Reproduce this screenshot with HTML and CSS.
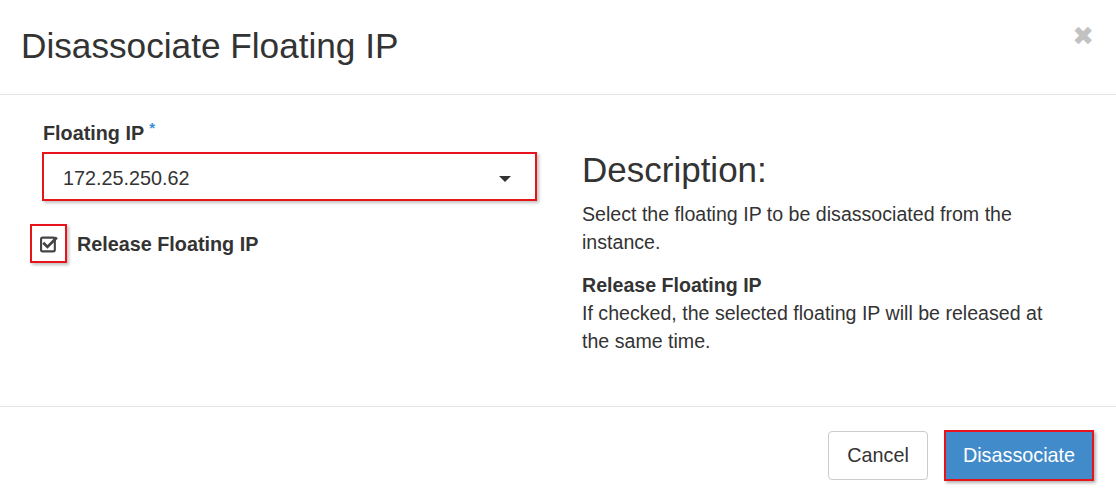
FILE: index.html
```html
<!DOCTYPE html>
<html>
<head>
<meta charset="utf-8">
<link rel="stylesheet" href="styles.css">
</head>
<body>
<div class="modal">
  <div class="modal-header">
    <h3 class="modal-title">Disassociate Floating IP</h3>
    <span class="close">&#x2716;</span>
  </div>
  <div class="modal-body">
    <div class="left">
      <label class="field-label">Floating IP <span class="req">*</span></label>
      <div class="select-box">
        <span class="select-value">172.25.250.62</span>
        <span class="caret"></span>
      </div>
      <div class="check-row">
        <span class="check-box">
          <svg width="18" height="18" viewBox="0 0 17 17">
            <rect x="1" y="2.5" width="13" height="13" rx="1.5" fill="none" stroke="#444" stroke-width="2"/>
            <path d="M4 8.2 L7 11.2 L15 3.2" fill="none" stroke="#444" stroke-width="2.6" stroke-linecap="square"/>
          </svg>
        </span>
        <span class="check-label">Release Floating IP</span>
      </div>
    </div>
    <div class="right">
      <h3 class="desc-title">Description:</h3>
      <p class="desc-text">Select the floating IP to be disassociated from the instance.</p>
      <p class="desc-text"><strong>Release Floating IP</strong><br>If checked, the selected floating IP will be released at the same time.</p>
    </div>
  </div>
  <div class="modal-footer">
    <button class="btn btn-default">Cancel</button>
    <button class="btn btn-primary">Disassociate</button>
  </div>
</div>
</body>
</html>
```

FILE: styles.css
```css
html, body {
  margin: 0;
  padding: 0;
  background: #fff;
}
body {
  font-family: "Liberation Sans", Arial, sans-serif;
  color: #333;
}
.modal {
  width: 1116px;
  height: 500px;
  overflow: hidden;
}
.modal-header {
  height: 94px;
  border-bottom: 1px solid #e5e5e5;
  display: flex;
  align-items: flex-start;
  justify-content: space-between;
  padding: 0 22px 0 21px;
}
.modal-title {
  margin: 26px 0 0 0;
  font-size: 35.2px;
  font-weight: normal;
  line-height: 40px;
  color: #333;
}
.close {
  margin-top: 21px;
  font-size: 26px;
  color: #c2c2c2;
  font-family: "DejaVu Sans", sans-serif;
  font-weight: bold;
}
.modal-body {
  display: flex;
  height: 311px;
  border-bottom: 1px solid #e5e5e5;
}
.left {
  width: 512px;
  padding: 24px 0 0 30px;
  display: flex;
  flex-direction: column;
}
.field-label {
  margin-left: 13px;
  font-size: 19.8px;
  font-weight: bold;
  line-height: 28px;
  color: #333;
}
.req {
  color: #3b8fd6;
  font-size: 15px;
  vertical-align: top;
  position: relative;
  top: -5px;
}
.select-box {
  margin: 5px 0 0 12px;
  height: 45px;
  width: 448px;
  border: 2px solid #e8141b;
  box-shadow: 2px 2px 3px rgba(0,0,0,0.25);
  display: flex;
  align-items: center;
  justify-content: space-between;
  padding: 0 24px 0 19px;
}
.select-value {
  font-size: 19.8px;
  color: #333;
  position: relative;
  top: 2px;
}
.caret {
  width: 0;
  height: 0;
  border-left: 6px solid transparent;
  border-right: 6px solid transparent;
  border-top: 6px solid #333;
  margin-top: 4px;
}
.check-row {
  margin-top: 23px;
  display: flex;
  align-items: center;
}
.check-box {
  width: 33px;
  height: 35px;
  border: 2px solid #e8141b;
  box-shadow: 2px 2px 3px rgba(0,0,0,0.25);
  display: flex;
  align-items: center;
  justify-content: center;
}
.check-label {
  margin-left: 10px;
  font-size: 19.8px;
  font-weight: bold;
  color: #333;
  position: relative;
  top: 1px;
}
.right {
  padding: 55px 0 0 40px;
  width: 484px;
}
.desc-title {
  margin: 0;
  font-size: 35px;
  font-weight: normal;
  line-height: 40px;
  color: #333;
}
.desc-text {
  margin: 10px 0 0 0;
  font-size: 19.6px;
  line-height: 28px;
  color: #333;
}
.desc-text + .desc-text {
  margin-top: 15px;
}
.modal-footer {
  display: flex;
  justify-content: flex-end;
  align-items: center;
  gap: 16px;
  padding: 23px 22px 0 0;
}
.btn {
  font-family: "Liberation Sans", Arial, sans-serif;
  font-size: 19.8px;
  height: 49px;
  border-radius: 4px;
  cursor: pointer;
}
.btn-default {
  background: #fff;
  border: 1px solid #ccc;
  color: #333;
  width: 100px;
}
.btn-primary {
  background: #428bca;
  color: #fff;
  width: 150px;
  height: 51px;
  border: 2px solid #e8141b;
  border-radius: 0;
  box-shadow: 2px 2px 3px rgba(0,0,0,0.3);
}
```
